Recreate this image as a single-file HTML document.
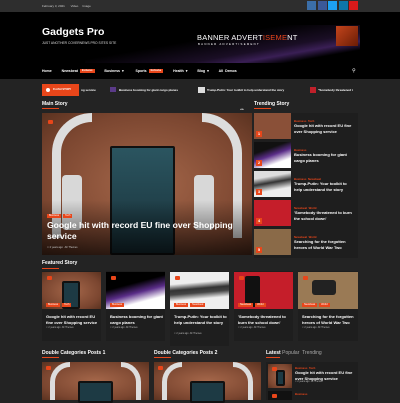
<!DOCTYPE html>
<html><head><meta charset="utf-8"><style>
*{margin:0;padding:0;box-sizing:border-box}
body{width:400px;height:400px;overflow:hidden;background:#232323;font-family:"Liberation Sans",sans-serif;color:#fff;position:relative}
.a{position:absolute}
.t{font-size:4px;font-weight:bold;color:#fff;line-height:5.5px}
.c{font-size:2.8px;color:#e8461a;font-weight:bold;line-height:4px}
.h{font-size:5px;font-weight:bold;white-space:nowrap}
.ul{height:1px;width:17px;background:#e8461a}
.tags{font-size:0;line-height:0;white-space:nowrap}
.tag{background:#e8461a;font-size:2.5px;padding:0 2px;height:4px;line-height:4px;display:inline-block;margin-right:2px;vertical-align:top}
.leather{background:radial-gradient(ellipse at 50% 50%,#a5674a,#7b4630 70%,#5a3220)}
.ph{background:#1d3a44;border:2px solid #111;border-radius:2px}
.num{width:6px;height:6px;background:#e8461a;font-size:4px;font-weight:bold;text-align:center;line-height:6px}
.ic{width:5px;height:4px;background:#e8461a;border-radius:1px}
.nw{white-space:nowrap}
</style></head><body>
<!-- top bar -->
<div class="a" style="left:0;top:0;width:400px;height:12px;background:#2e2e2e"></div>
<div class="a nw" style="left:42px;top:4px;font-size:3px;color:#ccc">February 3, 2021 &nbsp;&nbsp;&nbsp;&nbsp;&nbsp; Video &nbsp;&nbsp;&nbsp; Image</div>
<div class="a" style="left:307px;top:1px;width:9px;height:9px;background:#3b6ea8"></div>
<div class="a" style="left:318px;top:1px;width:9px;height:9px;background:#3b5998"></div>
<div class="a" style="left:328px;top:1px;width:9px;height:9px;background:#1da1f2"></div>
<div class="a" style="left:339px;top:1px;width:9px;height:9px;background:#0e76a8"></div>
<div class="a" style="left:349px;top:1px;width:9px;height:9px;background:#d91a1a"></div>
<!-- header -->
<div class="a" style="left:0;top:12px;width:400px;height:67px;background:#000"></div>
<div class="a" style="left:85px;top:25px;width:275px;height:38px;background:linear-gradient(170deg,#000 40%,#1a0e25 65%,#3a1f55 75%,#000 85%)"></div>
<div class="a" style="left:336px;top:26px;width:22px;height:20px;background:linear-gradient(135deg,#c4451c,#6b1c05)"></div>
<div class="a nw" style="left:42px;top:26px;font-size:10.5px;font-weight:bold">Gadgets Pro</div>
<div class="a nw" style="left:42px;top:41px;font-size:3.3px;color:#ddd">JUST ANOTHER COVERNEWS PRO SITES SITE</div>
<div class="a nw" style="left:197px;top:33px;font-size:7.5px;letter-spacing:0.2px">BANNER ADVERT<span style="color:#e8461a">ISEME</span>NT</div>
<div class="a nw" style="left:198px;top:42px;font-size:2.8px;letter-spacing:1.3px">BANNER ADVERTISEMENT</div>
<div class="a" style="left:42px;top:69px;font-size:3.5px;font-weight:bold;word-spacing:1px;white-space:nowrap;line-height:5px">Home &nbsp;&nbsp;&nbsp; Newsbeat <span class="tag" style="font-size:2.3px;vertical-align:middle">Exclusive</span> &nbsp;&nbsp; Business ▾ &nbsp;&nbsp;&nbsp;&nbsp; Sports <span class="tag" style="font-size:2.3px;vertical-align:middle">Exclusive</span> &nbsp;&nbsp; Health ▾ &nbsp;&nbsp;&nbsp; Blog ▾ &nbsp;&nbsp;&nbsp; All Demos</div>
<div class="a" style="left:352px;top:68px;font-size:5px">⚲</div>
<!-- flash -->
<div class="a nw" style="left:42px;top:84px;width:37px;height:12px;background:#e8461a;font-size:2.6px;font-weight:bold;line-height:12px;padding-left:11px">FLASH STORY</div>
<div class="a" style="left:46px;top:88px;width:4px;height:4px;border-radius:50%;background:#fff"></div>
<div class="a nw" style="left:81px;top:88px;font-size:3px;font-weight:bold">ng service</div>
<div class="a" style="left:110px;top:87px;width:6px;height:5px;background:#5a3a88"></div>
<div class="a nw" style="left:119px;top:88px;font-size:3px;font-weight:bold">Business booming for giant cargo planes</div>
<div class="a" style="left:198px;top:87px;width:7px;height:6px;background:#ddd"></div>
<div class="a nw" style="left:207px;top:88px;font-size:3px;font-weight:bold">Trump-Putin: Your toolkit to help understand the story</div>
<div class="a" style="left:310px;top:87px;width:6px;height:6px;background:#c0202a"></div>
<div class="a nw" style="left:318px;top:88px;font-size:3px;font-weight:bold">"Somebody threatened t</div>
<!-- main story -->
<div class="a h" style="left:42px;top:101px">Main Story</div>
<div class="a ul" style="left:42px;top:108px"></div>
<div class="a nw" style="left:240px;top:107px;font-size:3px">◂ ▸</div>
<div class="a leather" style="left:42px;top:113px;width:210px;height:142px"></div>
<div class="a" style="left:52px;top:113px;width:40px;height:125px;border:9px solid #ddd;border-bottom:none;border-radius:40px 0 0 0;border-right:none"></div>
<div class="a" style="left:202px;top:113px;width:40px;height:125px;border:9px solid #ddd;border-bottom:none;border-radius:0 40px 0 0;border-left:none"></div>
<div class="a" style="left:62px;top:175px;width:20px;height:55px;background:#d8d8d8;border-radius:4px"></div>
<div class="a" style="left:194px;top:175px;width:20px;height:55px;background:#d8d8d8;border-radius:4px"></div>
<div class="a ph" style="left:110px;top:146px;width:65px;height:109px;background:linear-gradient(#2b5560,#183038)"></div>
<div class="a" style="left:42px;top:200px;width:210px;height:55px;background:linear-gradient(transparent,rgba(0,0,0,.65))"></div>
<div class="a ic" style="left:48px;top:120px"></div>
<div class="a tags" style="left:47px;top:214px"><span class="tag">Business</span><span class="tag">Tech</span></div>
<div class="a" style="left:47px;top:220px;font-size:8.6px;font-weight:bold;line-height:11px;width:205px">Google hit with record EU fine over Shopping service</div>
<div class="a nw" style="left:47px;top:246px;font-size:2.5px;color:#ccc">⏲ 2 years ago &nbsp; AF Themes</div>
<!-- trending -->
<div class="a h" style="left:254px;top:101px">Trending Story</div>
<div class="a ul" style="left:254px;top:108px"></div>
<div class="a" style="left:254px;top:113px;width:104px;height:145px;background:#1e1e1e"></div>
<div class="a" style="left:254px;top:113px;width:37px;height:26px;background:#8a5038"></div>
<div class="a" style="left:254px;top:142px;width:37px;height:26px;background:linear-gradient(160deg,#111 30%,#5a2d88 50%,#fff 75%)"></div>
<div class="a" style="left:254px;top:171px;width:37px;height:26px;background:linear-gradient(170deg,#ddd 25%,#333 45%,#eee 70%)"></div>
<div class="a" style="left:254px;top:200px;width:37px;height:26px;background:#c51e2a"></div>
<div class="a" style="left:254px;top:229px;width:37px;height:26px;background:#8a6a48"></div>
<div class="a num" style="left:256px;top:131px">1</div>
<div class="a num" style="left:256px;top:160px">2</div>
<div class="a num" style="left:256px;top:189px">3</div>
<div class="a num" style="left:256px;top:218px">4</div>
<div class="a num" style="left:256px;top:247px">5</div>
<div class="a" style="left:294px;top:119px;width:60px"><div class="c">Business &nbsp;Tech</div><div class="t">Google hit with record EU fine over Shopping service</div></div>
<div class="a" style="left:294px;top:148px;width:60px"><div class="c">Business</div><div class="t">Business booming for giant cargo planes</div></div>
<div class="a" style="left:294px;top:177px;width:60px"><div class="c">Business &nbsp;Newsbeat</div><div class="t">Trump-Putin: Your toolkit to help understand the story</div></div>
<div class="a" style="left:294px;top:206px;width:60px"><div class="c">Newsbeat &nbsp;World</div><div class="t">'Somebody threatened to burn the school down'</div></div>
<div class="a" style="left:294px;top:235px;width:60px"><div class="c">Newsbeat &nbsp;World</div><div class="t">Searching for the forgotten heroes of World War Two</div></div>
<!-- featured -->
<div class="a h" style="left:42px;top:260px">Featured Story</div>
<div class="a ul" style="left:42px;top:268px"></div>
<div class="a" style="left:42px;top:271px;width:59px;height:70px;background:#1e1e1e"></div>
<div class="a" style="left:106px;top:271px;width:59px;height:70px;background:#1e1e1e"></div>
<div class="a" style="left:170px;top:271px;width:59px;height:75px;background:#1e1e1e"></div>
<div class="a" style="left:234px;top:271px;width:59px;height:70px;background:#1e1e1e"></div>
<div class="a" style="left:298px;top:271px;width:60px;height:70px;background:#1e1e1e"></div>
<div class="a leather" style="left:42px;top:272px;width:59px;height:37px"></div>
<div class="a ph" style="left:62px;top:281px;width:18px;height:28px"></div>
<div class="a" style="left:106px;top:272px;width:59px;height:37px;background:linear-gradient(165deg,#000 35%,#5a2d88 55%,#fff 75%)"></div>
<div class="a" style="left:170px;top:272px;width:59px;height:37px;background:linear-gradient(175deg,#eee 30%,#333 45%,#444 55%,#eee 70%)"></div>
<div class="a" style="left:234px;top:272px;width:59px;height:37px;background:#c51e2a"></div>
<div class="a" style="left:245px;top:276px;width:15px;height:31px;background:#111;border-radius:2px"></div>
<div class="a" style="left:298px;top:272px;width:60px;height:37px;background:#9a7a55"></div>
<div class="a" style="left:312px;top:280px;width:24px;height:15px;background:#222;border-radius:3px"></div>
<div class="a tags" style="left:46px;top:303px"><span class="tag">Business</span><span class="tag">Tech</span></div>
<div class="a tags" style="left:110px;top:303px"><span class="tag">Business</span></div>
<div class="a tags" style="left:174px;top:303px"><span class="tag">Business</span><span class="tag">Newsbeat</span></div>
<div class="a tags" style="left:238px;top:303px"><span class="tag">Newsbeat</span><span class="tag">World</span></div>
<div class="a tags" style="left:302px;top:303px"><span class="tag">Newsbeat</span><span class="tag">World</span></div>
<div class="a ic" style="left:47px;top:276px"></div><div class="a ic" style="left:111px;top:276px"></div><div class="a ic" style="left:175px;top:276px"></div><div class="a ic" style="left:239px;top:276px"></div><div class="a ic" style="left:303px;top:276px"></div>
<div class="a t" style="left:46px;top:314px;width:54px">Google hit with record EU fine over Shopping service</div>
<div class="a t" style="left:110px;top:314px;width:54px">Business booming for giant cargo planes</div>
<div class="a t" style="left:174px;top:314px;width:54px">Trump-Putin: Your toolkit to help understand the story</div>
<div class="a t" style="left:238px;top:314px;width:54px">'Somebody threatened to burn the school down'</div>
<div class="a t" style="left:302px;top:314px;width:54px">Searching for the forgotten heroes of World War Two</div>
<div class="a nw" style="left:46px;top:327px;font-size:2.3px;color:#bbb">⏲ 2 years ago &nbsp;AF Themes</div>
<div class="a nw" style="left:110px;top:327px;font-size:2.3px;color:#bbb">⏲ 2 years ago &nbsp;AF Themes</div>
<div class="a nw" style="left:174px;top:333px;font-size:2.3px;color:#bbb">⏲ 2 years ago &nbsp;AF Themes</div>
<div class="a nw" style="left:238px;top:327px;font-size:2.3px;color:#bbb">⏲ 2 years ago &nbsp;AF Themes</div>
<div class="a nw" style="left:302px;top:327px;font-size:2.3px;color:#bbb">⏲ 2 years ago &nbsp;AF Themes</div>
<!-- bottom -->
<div class="a h" style="left:42px;top:350px">Double Categories Posts 1</div>
<div class="a ul" style="left:42px;top:357px"></div>
<div class="a h" style="left:154px;top:350px">Double Categories Posts 2</div>
<div class="a ul" style="left:154px;top:357px"></div>
<div class="a leather" style="left:42px;top:362px;width:107px;height:38px"></div>
<div class="a leather" style="left:154px;top:362px;width:107px;height:38px"></div>
<div class="a" style="left:50px;top:362px;width:20px;height:38px;border:5px solid #ddd;border-right:none;border-bottom:none;border-radius:20px 0 0 0"></div>
<div class="a" style="left:121px;top:362px;width:20px;height:38px;border:5px solid #ddd;border-left:none;border-bottom:none;border-radius:0 20px 0 0"></div>
<div class="a" style="left:162px;top:362px;width:20px;height:38px;border:5px solid #ddd;border-right:none;border-bottom:none;border-radius:20px 0 0 0"></div>
<div class="a" style="left:233px;top:362px;width:20px;height:38px;border:5px solid #ddd;border-left:none;border-bottom:none;border-radius:0 20px 0 0"></div>
<div class="a ph" style="left:78px;top:381px;width:35px;height:22px"></div>
<div class="a ph" style="left:190px;top:381px;width:35px;height:22px"></div>
<div class="a ic" style="left:46px;top:366px"></div><div class="a ic" style="left:158px;top:366px"></div>
<div class="a" style="left:266px;top:350px;font-size:5px;white-space:nowrap"><b>Latest</b> <span style="color:#aaa">Popular &nbsp;Trending</span></div>
<div class="a ul" style="left:266px;top:357px;width:14px"></div>
<div class="a" style="left:266px;top:362px;width:92px;height:38px;background:#1e1e1e"></div>
<div class="a leather" style="left:268px;top:364px;width:24px;height:24px"></div>
<div class="a ph" style="left:276px;top:370px;width:9px;height:16px"></div>
<div class="a ic" style="left:272px;top:367px"></div>
<div class="a" style="left:268px;top:391px;width:24px;height:9px;background:#111"></div>
<div class="a ic" style="left:272px;top:394px"></div>
<div class="a" style="left:295px;top:366px;width:62px"><div class="c">Business &nbsp;Tech</div><div class="t">Google hit with record EU fine over Shopping service</div><div class="nw" style="font-size:2.3px;color:#bbb">⏲ 2 years ago &nbsp;AF Themes</div></div>
<div class="a c" style="left:295px;top:392px">Business</div>
</body></html>
